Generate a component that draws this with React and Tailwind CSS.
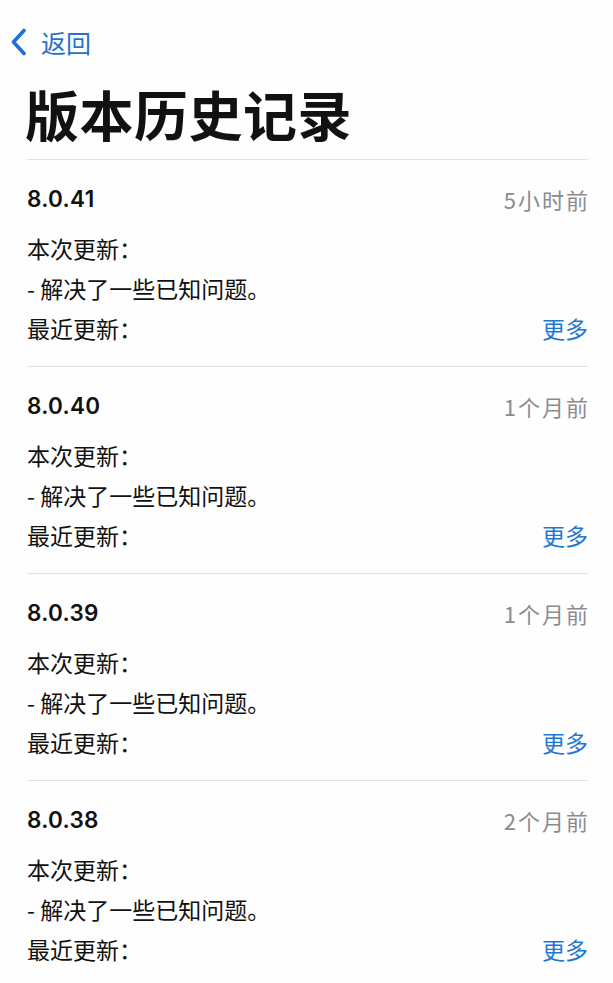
import React from "react";

const versions = [
  { v: "8.0.41", t: "5小时前" },
  { v: "8.0.40", t: "1个月前" },
  { v: "8.0.39", t: "1个月前" },
  { v: "8.0.38", t: "2个月前" },
];

const font = { fontFamily: '"Noto Sans CJK SC", "Noto Sans", sans-serif' };

export default function App() {
  return (
    <div className="w-[613px] h-[983px] overflow-hidden bg-[#fefefe] text-[#111]" style={font}>
      <div className="mt-[27px] h-[30px] flex items-center pl-[10px]">
        <svg width="17" height="28" viewBox="0 0 17 28" className="mr-[14px]">
          <path d="M14 2.5 L3.5 14 L14 25.5" fill="none" stroke="#1f6fd6" strokeWidth="3.6" strokeLinecap="round" strokeLinejoin="round" />
        </svg>
        <span className="text-[25px] leading-none text-[#2572cf]">返回</span>
      </div>
      <div className="mt-[27px] pl-[25px] h-[60px] flex items-center">
        <h1 className="text-[54px] font-bold leading-none tracking-[0.5px]">版本历史记录</h1>
      </div>
      <div className="ml-[27px] mr-[25px] mt-[15px]">
        {versions.map((item) => (
          <div key={item.v} className="border-t border-[#e2e2e4]">
            <div className="pt-[19px] pb-[18px]">
              <div className="h-[40px] flex items-center justify-between">
                <span className="text-[22.5px] font-semibold tracking-[0.3px]" style={{ fontFamily: 'Inter, "Noto Sans", sans-serif' }}>{item.v}</span>
                <span className="text-[22px] text-[#8b8b8f] tracking-[2px] mr-[-2px]">{item.t}</span>
              </div>
              <div className="mt-[9px] h-[40px] flex items-center text-[23px]">本次更新：</div>
              <div className="h-[40px] flex items-center text-[23px]">- 解决了一些已知问题。</div>
              <div className="h-[40px] flex items-center justify-between text-[23px]">
                <span>最近更新：</span>
                <span className="text-[#1e78d2]">更多</span>
              </div>
            </div>
          </div>
        ))}
      </div>
    </div>
  );
}
